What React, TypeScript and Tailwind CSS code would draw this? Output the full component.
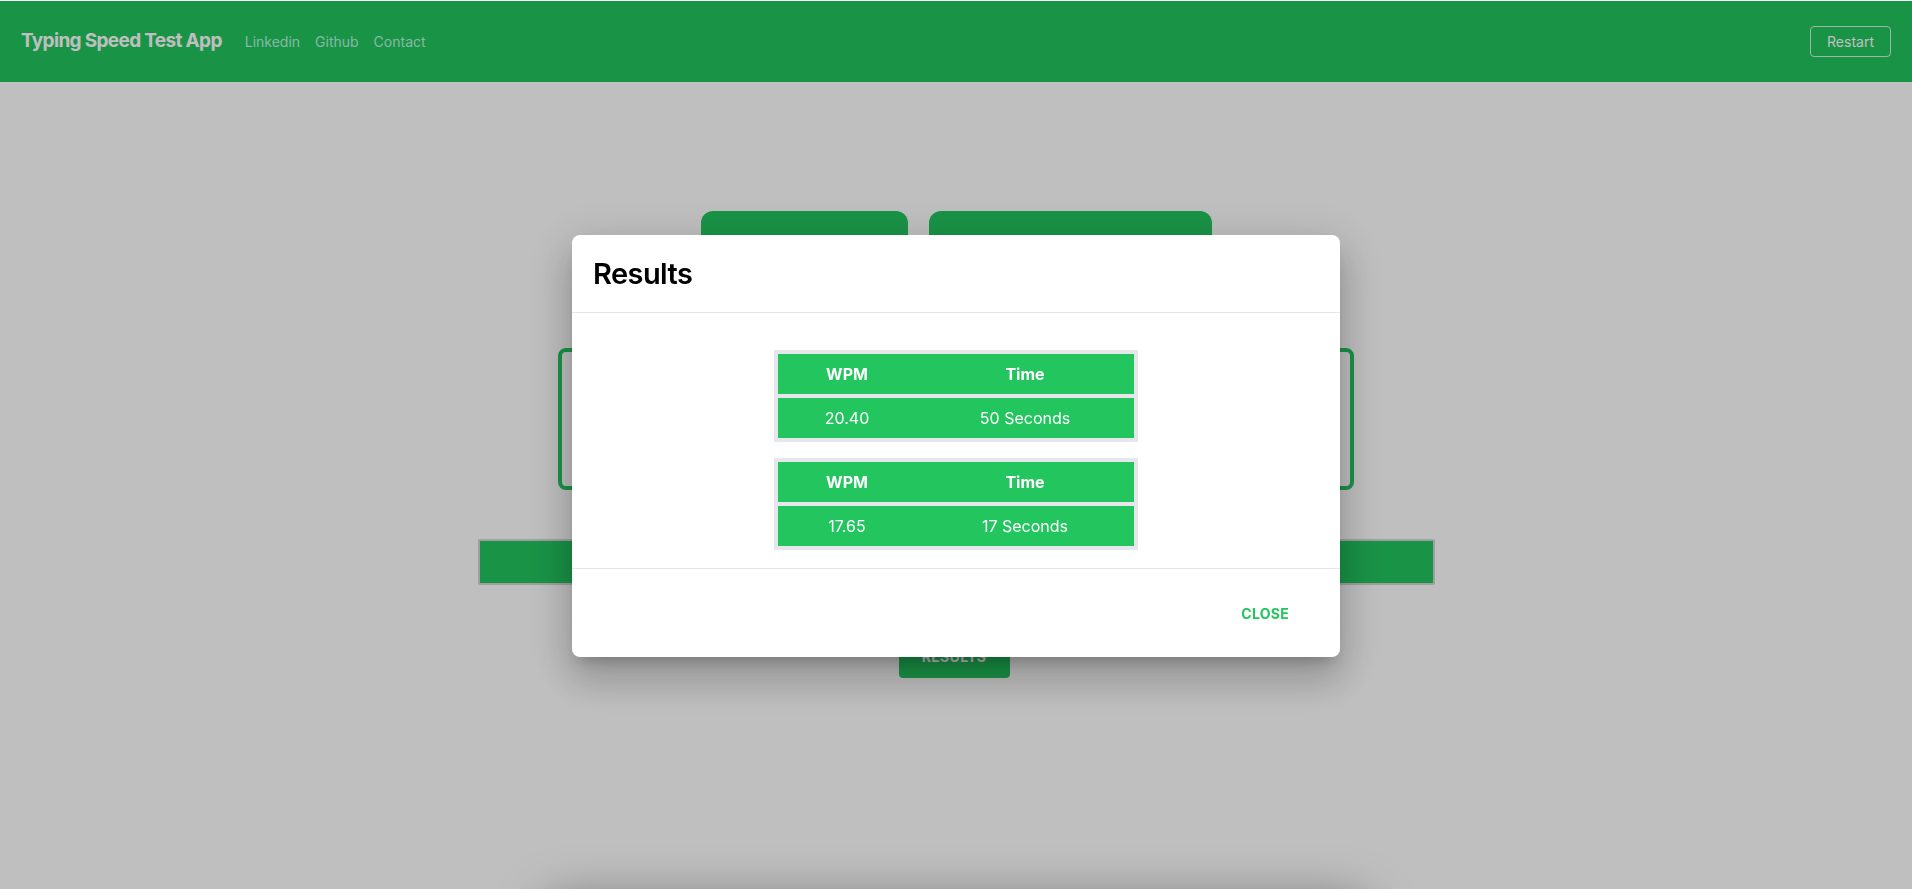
import React from "react";

function ResultTable({ wpm, time }: { wpm: string; time: string }) {
  return (
    <div className="flex w-[364px] flex-col gap-1 bg-[#e5e7eb] p-1 text-white">
      <div className="grid h-10 grid-cols-[138px_218px] items-center bg-[#22c55e] text-[16px] font-bold">
        <div className="text-center">WPM</div>
        <div className="text-center">Time</div>
      </div>
      <div className="grid h-10 grid-cols-[138px_218px] items-center bg-[#22c55e] text-[16px]">
        <div className="text-center">{wpm}</div>
        <div className="text-center">{time}</div>
      </div>
    </div>
  );
}

export default function App() {
  return (
    <div
      className="relative h-screen w-full overflow-hidden bg-white"
      style={{ fontFamily: "Inter, 'Noto Sans', sans-serif" }}
    >
      {/* page */}
      <div className="pt-px">
        <nav className="flex h-[81px] items-center bg-[#22c55e] px-[21px]">
          <div className="text-[19px] font-bold tracking-[-0.035em] text-white">Typing Speed Test App</div>
          <div className="ml-[23px] flex items-center gap-[15px] text-[14px] text-[#b4f5dc]">
            <span>Linkedin</span>
            <span>Github</span>
            <span>Contact</span>
          </div>
          <div className="ml-auto">
            <button className="h-[31px] w-[81px] rounded-[4px] border border-white/80 text-[14px] text-white">
              Restart
            </button>
          </div>
        </nav>

        <main className="flex flex-col items-center pt-[129px]">
          <div className="flex gap-[21px]">
            <div className="h-[100px] w-[207px] rounded-xl bg-[#22c55e]" />
            <div className="h-[100px] w-[283px] rounded-xl bg-[#22c55e]" />
          </div>
          <div className="mt-[37px] h-[142px] w-[796px] rounded-lg border-4 border-[#22c55e]" />
          <div className="mt-[49px] h-[46px] w-[957px] rounded-[2px] border-2 border-[#d4d4d8] bg-[#22c55e]" />
          <button className="mt-[49px] -ml-[4px] flex h-[44px] w-[111px] items-center justify-center rounded-[4px] bg-[#22c55e] text-[14px] font-bold tracking-wide text-white">
            RESULTS
          </button>
          <div className="mt-[222px] h-[200px] w-[820px] rounded-lg bg-white shadow-[0_0_50px_rgba(0,0,0,0.4)]" />
        </main>
      </div>

      {/* overlay */}
      <div className="fixed inset-x-0 top-px bottom-0 flex items-start justify-center bg-black/25">
        <div className="mt-[234px] w-[768px] overflow-hidden rounded-lg bg-white shadow-[0_11px_15px_-7px_rgba(0,0,0,0.2),0_24px_38px_3px_rgba(0,0,0,0.14),0_9px_46px_8px_rgba(0,0,0,0.12)]">
          <div className="flex h-[78px] items-center border-b border-[#e2e6ef] pl-[21px]">
            <h2 className="text-[29px] font-semibold tracking-[-0.02em] text-black">Results</h2>
          </div>
          <div className="flex flex-col items-center gap-4 pt-[37px] pb-[18px]">
            <ResultTable wpm="20.40" time="50 Seconds" />
            <ResultTable wpm="17.65" time="17 Seconds" />
          </div>
          <div className="flex h-[89px] items-center justify-end border-t border-[#e2e6ef] pr-[35px]">
            <button className="px-4 py-2 text-[14px] font-bold uppercase tracking-[0.02em] text-[#22c55e]">
              Close
            </button>
          </div>
        </div>
      </div>
    </div>
  );
}
